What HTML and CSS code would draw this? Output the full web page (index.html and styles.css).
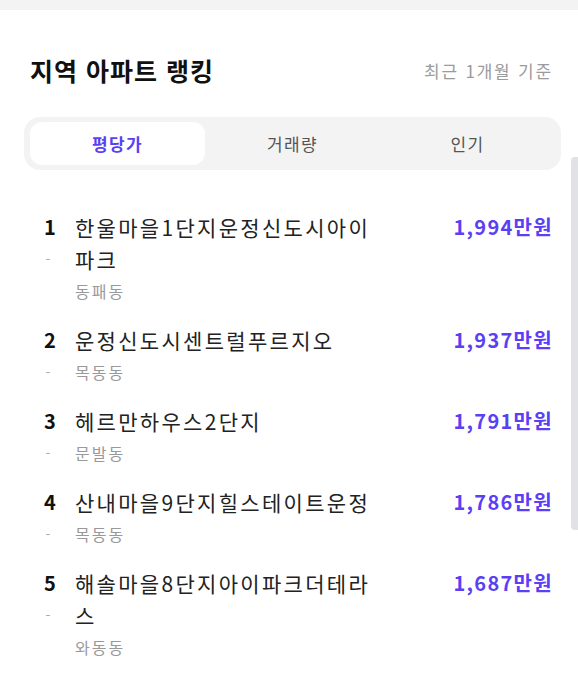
FILE: index.html
```html
<!DOCTYPE html>
<html lang="ko">
<head>
<meta charset="utf-8">
<link rel="stylesheet" href="styles.css">
</head>
<body>
<div class="topstrip"></div>
<section class="card">
  <header class="head">
    <h2 class="title">지역 아파트 랭킹</h2>
    <span class="basis">최근 1개월 기준</span>
  </header>
  <nav class="tabs">
    <button class="tab active">평당가</button>
    <button class="tab">거래량</button>
    <button class="tab">인기</button>
  </nav>
  <ol class="list">
    <li class="row">
      <div class="rank"><span class="num">1</span><span class="dash">-</span></div>
      <div class="info"><div class="name">한울마을1단지운정신도시아이파크</div><div class="dong">동패동</div></div>
      <div class="price">1,994만원</div>
    </li>
    <li class="row">
      <div class="rank"><span class="num">2</span><span class="dash">-</span></div>
      <div class="info"><div class="name">운정신도시센트럴푸르지오</div><div class="dong">목동동</div></div>
      <div class="price">1,937만원</div>
    </li>
    <li class="row">
      <div class="rank"><span class="num">3</span><span class="dash">-</span></div>
      <div class="info"><div class="name">헤르만하우스2단지</div><div class="dong">문발동</div></div>
      <div class="price">1,791만원</div>
    </li>
    <li class="row">
      <div class="rank"><span class="num">4</span><span class="dash">-</span></div>
      <div class="info"><div class="name">산내마을9단지힐스테이트운정</div><div class="dong">목동동</div></div>
      <div class="price">1,786만원</div>
    </li>
    <li class="row">
      <div class="rank"><span class="num">5</span><span class="dash">-</span></div>
      <div class="info"><div class="name">해솔마을8단지아이파크더테라스</div><div class="dong">와동동</div></div>
      <div class="price">1,687만원</div>
    </li>
  </ol>
  <div class="scroll-thumb"></div>
</section>
</body>
</html>
```
FILE: styles.css
```css
* { box-sizing: border-box; }
html, body { margin: 0; padding: 0; }
body {
  background: #ffffff;
  font-family: "Noto Sans CJK KR", "Noto Sans", sans-serif;
  color: #222;
  width: 578px;
  height: 684px;
  overflow: hidden;
}
.topstrip {
  height: 10px;
  background: #f3f3f3;
}
.card {
  position: relative;
  background: #fff;
  padding: 45px 25px 0 24px;
  height: 674px;
}
.head {
  display: flex;
  justify-content: space-between;
  align-items: center;
  padding-left: 6px;
  height: 30px;
}
.title {
  margin: 0;
  font-size: 25px;
  font-weight: 700;
  color: #111;
  letter-spacing: 1px;
}
.basis {
  font-size: 17px;
  color: #9b9b9b;
  letter-spacing: 1.8px;
}
.tabs {
  margin-top: 32px;
  display: grid;
  grid-template-columns: repeat(3, 1fr);
  background: #f3f3f3;
  border-radius: 16px;
  padding: 5px 6px;
  height: 53px;
  width: 537px;
}
.tab {
  border: 0;
  background: transparent;
  font-family: inherit;
  font-size: 17px;
  color: #555;
  border-radius: 12px;
  padding: 0;
  letter-spacing: 1.4px;
}
.tab.active {
  background: #fff;
  color: #5b3ff5;
  font-weight: 700;
}
.list {
  list-style: none;
  margin: 41px 0 0 0;
  padding: 0 0 0 20px;
  display: flex;
  flex-direction: column;
  gap: 17px;
}
.row {
  display: flex;
  align-items: flex-start;
}
.rank {
  width: 31px;
  display: flex;
  flex-direction: column;
  align-items: flex-start;
}
.num {
  font-size: 20px;
  font-weight: 700;
  line-height: 32px;
  color: #111;
  width: 12px;
  text-align: center;
}
.dash {
  font-size: 14px;
  line-height: 32px;
  color: #aaa;
  width: 8px;
  text-align: center;
}
.info {
  width: 312px;
}
.name {
  font-size: 21px;
  line-height: 32px;
  color: #222;
  letter-spacing: 2.3px;
  word-break: break-all;
}
.dong {
  font-size: 16px;
  line-height: 32px;
  color: #999;
  letter-spacing: 2px;
}
.price {
  margin-left: auto;
  font-size: 20px;
  font-weight: 700;
  line-height: 32px;
  color: #5b3ff5;
  letter-spacing: 1.3px;
}
.scroll-thumb {
  position: absolute;
  right: 0;
  top: 147px;
  width: 7px;
  height: 373px;
  background: #e1e2e6;
  border-radius: 4px 0 0 4px;
}
```
